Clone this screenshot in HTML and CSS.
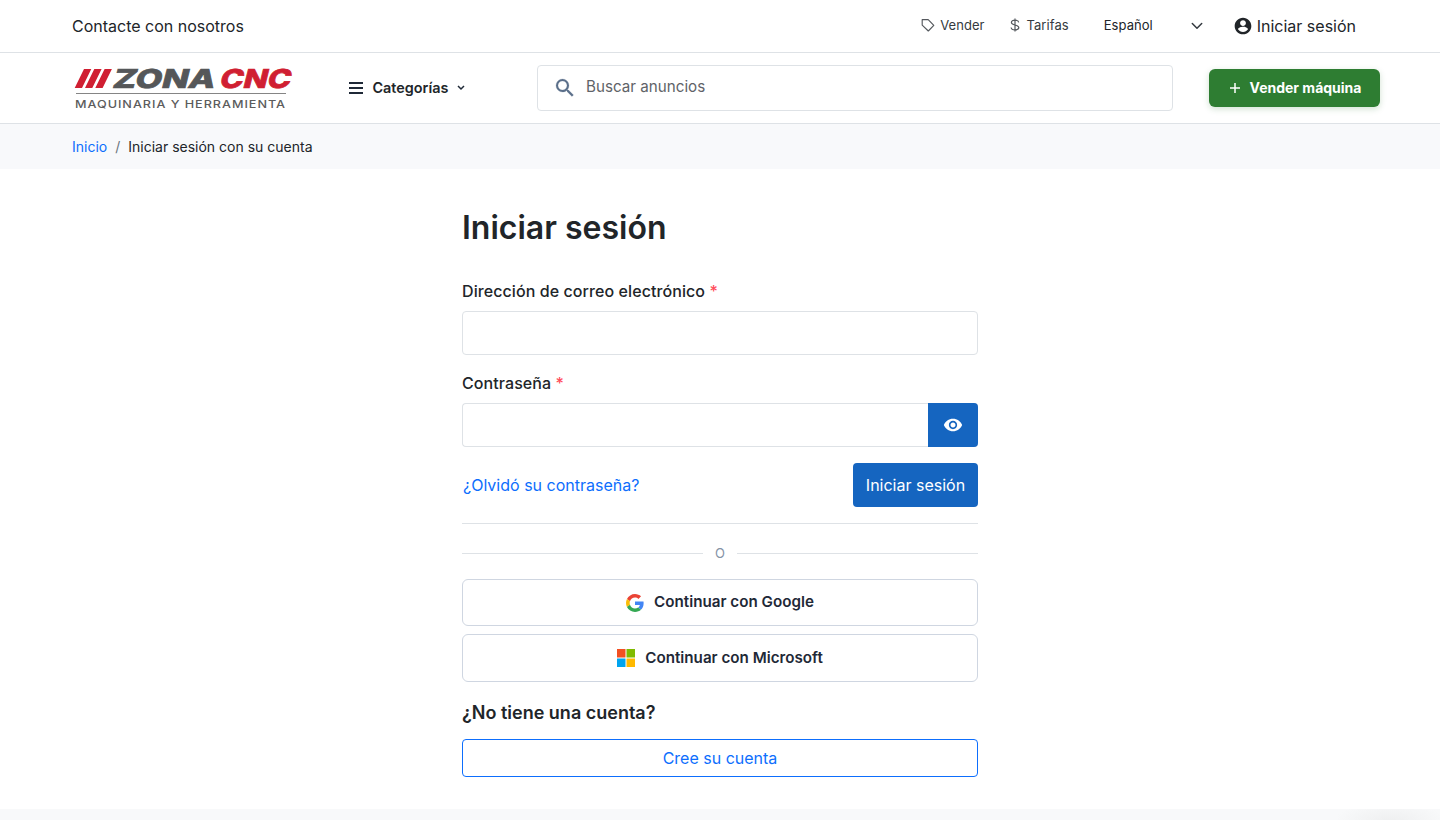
FILE: index.html
```html
<!DOCTYPE html>
<html lang="es">
<head>
<meta charset="utf-8">
<title>Iniciar sesión</title>
<link rel="stylesheet" href="styles.css">
</head>
<body>
<div class="topbar">
  <a class="contact">Contacte con nosotros</a>
  <nav class="topnav">
    <a class="toplink sell"><svg width="14" height="14" viewBox="0 0 14 14" fill="none" stroke="#55595e" stroke-width="1.15" stroke-linejoin="round"><path d="M1.200 1.600h6L12.800 7.400 7.300 13 1.200 7.200z"/></svg>Vender</a>
    <a class="toplink fees"><svg width="10" height="14" viewBox="0 0 10 14" fill="none" stroke="#55595e" stroke-width="1.200"><path d="M5 .5v13M8.700 4.300C8.500 2.900 7.200 2.200 5 2.200 2.800 2.200 1.400 3.100 1.400 4.500 1.400 6 2.700 6.500 5 7s3.800 1 3.800 2.600S7.400 11.900 5 11.900 1.300 11 1.100 9.500"/></svg>Tarifas</a>
    <span class="lang">Español<svg width="12" height="8" viewBox="0 0 12 8" fill="none" stroke="#343a40" stroke-width="1.500" stroke-linecap="round" stroke-linejoin="round"><path d="M1.300 1.500 6 6.200l4.700-4.700"/></svg></span>
    <a class="account"><svg width="20" height="20" viewBox="0 0 24 24" fill="#212529"><path d="M12 2C6.480 2 2 6.480 2 12s4.480 10 10 10 10-4.480 10-10S17.520 2 12 2zm0 3c1.930 0 3.500 1.570 3.500 3.500S13.930 12 12 12s-3.500-1.570-3.500-3.500S10.070 5 12 5zm0 14.200c-2.500 0-4.710-1.280-6-3.220.030-1.990 4-3.080 6-3.080s5.970 1.090 6 3.080c-1.290 1.940-3.500 3.220-6 3.220z"/></svg>Iniciar sesión</a>
  </nav>
</div>
<header class="header">
  <svg class="logo" width="222" height="46" viewBox="0 0 222 46">
    <path fill="#d01f32" d="M12 4h7.300L10 23H2.700zM22.300 4h7.300l-9.300 19H13zM32.600 4h7.300l-9.300 19h-7.300z"/>
    <g class="brand">
      <text transform="translate(39.500 23) skewX(-14)" textLength="102" lengthAdjust="spacingAndGlyphs" fill="#555759" stroke="#555759">ZONA</text>
      <text transform="translate(146.500 23) skewX(-14)" textLength="71" lengthAdjust="spacingAndGlyphs" fill="#d01f32" stroke="#d01f32">CNC</text>
    </g>
    <path stroke="#858585" d="M4 28.500h210"/>
    <text class="tagline" x="3" y="42.700" textLength="211" lengthAdjust="spacingAndGlyphs">MAQUINARIA Y HERRAMIENTA</text>
  </svg>
  <button class="categories"><svg width="14" height="12" viewBox="0 0 14 12" stroke="#1f2937" stroke-width="2"><path d="M0 1h14M0 6h14M0 11h14"/></svg>Categorías<svg class="caret" width="8" height="6" viewBox="0 0 8 6" fill="none" stroke="#1f2937" stroke-width="1.500"><path d="M1 1l3 3 3-3"/></svg></button>
  <div class="search"><svg width="24" height="24" viewBox="0 0 24 24" fill="#5b6f8a" stroke="#5b6f8a" stroke-width=".2"><path d="M15.500 14h-.79l-.28-.27A6.470 6.470 0 0 0 16 9.500 6.500 6.500 0 1 0 9.500 16c1.610 0 3.090-.59 4.230-1.570l.27.280v.79l5 4.990L20.490 19l-4.990-5zm-6 0C7.010 14 5 11.990 5 9.500S7.010 5 9.500 5 14 7.010 14 9.500 11.990 14 9.500 14z"/></svg><span>Buscar anuncios</span></div>
  <button class="sell-button"><svg width="10" height="10" viewBox="0 0 10 10" stroke="#fff" stroke-width="1.500"><path d="M0 5h10M5 0v10"/></svg>Vender máquina</button>
</header>
<div class="breadcrumb"><a>Inicio</a><span class="slash">/</span><span>Iniciar sesión con su cuenta</span></div>
<main class="login">
  <h1>Iniciar sesión</h1>
  <label>Dirección de correo electrónico <i>*</i></label>
  <div class="field"></div>
  <label>Contraseña <i>*</i></label>
  <div class="field password"><button class="reveal"><svg width="20" height="20" viewBox="0 0 24 24" fill="#fff"><path d="M12 4.500C7 4.500 2.730 7.610 1 12c1.730 4.390 6 7.500 11 7.500s9.270-3.110 11-7.500c-1.730-4.390-6-7.500-11-7.500zM12 17c-2.760 0-5-2.240-5-5s2.240-5 5-5 5 2.240 5 5-2.240 5-5 5zm0-8c-1.660 0-3 1.340-3 3s1.340 3 3 3 3-1.340 3-3-1.340-3-3-3z"/></svg></button></div>
  <div class="actions"><a class="forgot">¿Olvidó su contraseña?</a><button class="submit">Iniciar sesión</button></div>
  <div class="divider"><span>O</span></div>
  <button class="social google"><svg width="18" height="18" viewBox="0 0 48 48"><path fill="#ea4335" d="M24 9.500c3.540 0 6.710 1.220 9.210 3.600l6.850-6.850C35.900 2.380 30.470 0 24 0 14.620 0 6.510 5.380 2.560 13.220l7.980 6.190C12.430 13.720 17.740 9.500 24 9.500z"/><path fill="#4285f4" d="M46.980 24.550c0-1.570-.15-3.090-.38-4.550H24v9.020h12.940c-.58 2.960-2.260 5.480-4.780 7.180l7.730 6c4.510-4.180 7.090-10.360 7.090-17.650z"/><path fill="#fbbc05" d="M10.530 28.590A14.500 14.500 0 0 1 9.770 24c0-1.600.27-3.140.76-4.590l-7.980-6.190A23.900 23.900 0 0 0 0 24c0 3.880.92 7.540 2.560 10.780z"/><path fill="#34a853" d="M24 48c6.480 0 11.930-2.130 15.890-5.810l-7.730-6c-2.150 1.450-4.920 2.300-8.160 2.300-6.260 0-11.570-4.220-13.470-9.910l-7.980 6.190C6.510 42.620 14.620 48 24 48z"/></svg><span>Continuar con Google</span></button>
  <button class="social microsoft"><svg width="18" height="18" viewBox="0 0 18 18"><path fill="#f25022" d="M0 0h8.500v8.500H0z"/><path fill="#7fba00" d="M9.500 0H18v8.500H9.500z"/><path fill="#00a4ef" d="M0 9.500h8.500V18H0z"/><path fill="#ffb900" d="M9.500 9.500H18V18H9.500z"/></svg><span>Continuar con Microsoft</span></button>
  <h2>¿No tiene una cuenta?</h2>
  <a class="create">Cree su cuenta</a>
</main>
<footer class="footer"></footer>
</body>
</html>
```
FILE: styles.css
```css
* { box-sizing: border-box; }
body { margin: 0; height: 820px; overflow: hidden; display: flex; flex-direction: column; background: #fff; color: #212529; font: 16px/24px Inter, sans-serif; }
button { font: inherit; border: 0; margin: 0; background: none; color: inherit; }
svg { flex: none; display: block; }
a { color: #0d6efd; }

.topbar { height: 53px; flex: none; padding: 0 84px 0 72px; display: flex; align-items: center; justify-content: space-between; border-bottom: 1px solid #dee2e6; }
.topbar a { color: #212529; }
.topnav { display: flex; align-items: center; }
.toplink, .lang { display: flex; align-items: center; font-size: 13px; line-height: 20px; margin-bottom: 2px; letter-spacing: .06px; }
.topbar .toplink { color: #343a40; }
.sell { gap: 5px; margin-right: 25px; }
.fees { gap: 7px; margin-right: 35px; }
.lang { width: 98px; justify-content: space-between; margin-right: 31px; }
.lang svg { margin: 2px -1px 0 0; }
.account { display: flex; align-items: center; gap: 4px; }

.header { height: 71px; flex: none; display: flex; align-items: center; padding: 0 60px 0 72px; border-bottom: 1px solid #dee2e6; }
.logo { overflow: visible; }
.brand { font: 800 26px Inter, sans-serif; stroke-width: .7; }
.tagline { font: 500 10.500px Inter, sans-serif; letter-spacing: .8px; fill: #5c5c5c; }
.categories { display: flex; align-items: center; padding: 0; margin-left: 55px; gap: 9.500px; font-size: 14.400px; font-weight: 600; width: 133px; white-space: nowrap; }
.caret { margin-left: -1px; }
.search { width: 636px; height: 46px; margin-left: 55px; border: 1px solid #dee2e6; border-radius: 4px; display: flex; align-items: center; gap: 9px; padding-left: 15px; font-size: 15.200px; color: #5f6368; }
.search span { margin-bottom: 2px; }
.sell-button { width: 171px; height: 38px; margin-left: auto; display: flex; align-items: center; justify-content: center; gap: 10px; padding: 0 0 0 2px; border-radius: 6px; background: #2e7d32; color: #fff; font-size: 14px; font-weight: 700; white-space: nowrap; box-shadow: 0 2px 6px rgba(46, 125, 50, .22); }

.breadcrumb { height: 45px; flex: none; display: flex; align-items: center; padding: 0 72px; gap: 8px; background: #f8f9fb; font-size: 14px; }
.slash { color: #6c757d; }

.login { width: 516px; height: 640px; flex: none; margin: 0 auto; padding-top: 38px; display: flex; flex-direction: column; }
h1 { margin: 0 0 31px; font-size: 32px; line-height: 41px; font-weight: 600; }
label { font-weight: 500; margin-bottom: 8px; line-height: 24px; letter-spacing: .08px; }
label i { color: #ff4c5b; font-style: normal; }
.field { height: 44px; flex: none; border: 1px solid #dee2e6; border-radius: 4px; margin-bottom: 16px; }
.password { display: flex; justify-content: flex-end; border-right: 0; }
.reveal { width: 50px; height: 44px; margin: -1px 0; padding: 0; display: flex; align-items: center; justify-content: center; background: #1565c0; border-radius: 0 4px 4px 0; }
.actions { height: 61px; flex: none; display: flex; justify-content: space-between; border-bottom: 1px solid #dee2e6; line-height: 44px; }
.forgot { padding-left: 1px; }
.submit { width: 125px; height: 44px; padding: 0; background: #1565c0; color: #fff; border-radius: 4px; }
.divider { display: flex; align-items: center; gap: 12px; margin: 19px 0 15px; height: 21px; color: #8492a6; font-size: 13px; }
.divider span { margin-bottom: 2px; }
.divider::before, .divider::after { content: ""; flex: 1; height: 1px; background: #dee2e6; }
.social { height: 47px; flex: none; border: 1px solid #cfd6e1; border-radius: 6px; display: flex; align-items: center; justify-content: center; gap: 10px; font-size: 15.200px; font-weight: 600; color: #1f2937; margin-bottom: 8px; }
.google span { margin-bottom: 2px; }
.microsoft { height: 48px; margin-bottom: 19px; }
h2 { margin: 0 0 15px; font-size: 18px; line-height: 23px; font-weight: 600; }
.create { height: 38px; flex: none; border: 1px solid #0d6efd; border-radius: 4px; text-align: center; line-height: 37px; }
.footer { flex: 1; background: radial-gradient(ellipse 55px 19px at 1390px 12px, #eeeff0, #f8f9fa); }
```
